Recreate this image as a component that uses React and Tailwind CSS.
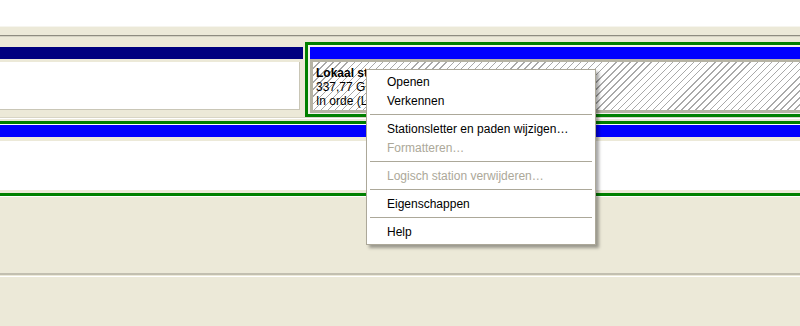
export default function App() {
  const items = [
    { t: "Openen" },
    { t: "Verkennen" },
    { sep: true },
    { t: "Stationsletter en paden wijzigen…" },
    { t: "Formatteren…", dis: true },
    { sep: true },
    { t: "Logisch station verwijderen…", dis: true },
    { sep: true },
    { t: "Eigenschappen" },
    { sep: true },
    { t: "Help" },
  ];
  return (
    <div className="relative flex h-[326px] w-[800px] flex-col overflow-hidden bg-[#ece9d8] font-['Liberation_Sans',Arial,sans-serif] text-[12px] leading-[14px] text-black">
      <div className="h-[26px] shrink-0 bg-white" />
      <div className="flex h-[16px] shrink-0 flex-col">
        <div className="h-px bg-[#f6f5ee]" />
        <div className="h-[8px] bg-[#ece9d8]" />
        <div className="h-px bg-[#8e8c80]" />
        <div className="h-px bg-[#d4d1c2]" />
        <div className="h-[5px] bg-[#ece9d8]" />
      </div>

      {/* disk row 1 */}
      <div className="flex h-[75px] shrink-0">
        <div className="flex w-[303px] shrink-0 flex-col pt-[5px]">
          <div className="h-[12px] bg-[#000080]" />
          <div className="mt-[3px] h-[48px] w-[300px] border-b border-r border-[#c9c6b6] bg-white" />
        </div>
        <div className="ml-[2px] flex flex-1 flex-col border-y-[3px] border-l-[3px] border-[#008000] bg-[#f4f3ec] pb-px pl-[2px] pt-[2px]">
          <div className="h-[12px] shrink-0 bg-[#0000ff]" />
          <div className="h-[54px] shrink-0 border-y-[3px] border-l-[3px] border-[#b6b3a4] bg-[repeating-linear-gradient(135deg,#ffffff_0px,#ffffff_4px,#a9a9a9_4px,#a9a9a9_5px)] pl-[3px] pt-[4px]">
            <div className="w-[50px] overflow-hidden whitespace-nowrap">
              <div className="font-bold">Lokaal station (E:)</div>
              <div>337,77 GB NTFS</div>
              <div>In orde (Logisch station)</div>
            </div>
          </div>
        </div>
      </div>

      <div className="flex h-[4px] shrink-0 flex-col">
        <div className="h-px bg-[#d8d5c6]" />
        <div className="h-px bg-white" />
      </div>

      {/* disk row 2 */}
      <div className="flex h-[75px] shrink-0 flex-col border-y-[3px] border-[#008000] bg-[#ece9d8] pt-px">
        <div className="-mt-px h-px bg-white" />
        <div className="h-[12px] bg-[#0000ff]" />
        <div className="mt-[4px] h-[49px] bg-white" />
      </div>
      <div className="h-px shrink-0 bg-white" />
      <div className="h-[76px] shrink-0" />
      <div className="h-[2px] shrink-0 bg-[#c2bfb0]" />
      <div className="h-px shrink-0" />
      <div className="h-px shrink-0 bg-white" />
      <div className="flex-1" />

      {/* context menu */}
      <div className="absolute left-[366px] top-[69px] w-[230px] border border-[#aca899] bg-white pb-[3px] pt-[2px] shadow-[3px_3px_3px_rgba(0,0,0,0.35)]">
        {items.map((it, i) =>
          it.sep ? (
            <div key={i} className="mx-[3px] my-[4px] h-px bg-[#aca899]" />
          ) : (
            <div
              key={i}
              className={`flex h-[19px] items-center whitespace-nowrap pl-[20px] ${it.dis ? "text-[#aca899]" : "text-black"}`}
            >
              {it.t}
            </div>
          )
        )}
      </div>
    </div>
  );
}
